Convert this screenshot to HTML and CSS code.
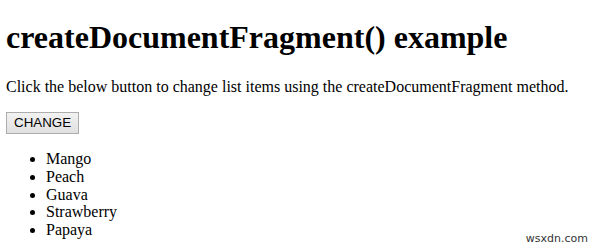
FILE: index.html
```html
<!DOCTYPE html>
<html lang="en">
<head>
    <meta charset="UTF-8">
    <meta name="viewport" content="width=device-width, initial-scale=1.0">
    <title>createDocumentFragment() example</title>
    <link rel="stylesheet" href="styles.css">
</head>
<body>
    <h1>createDocumentFragment() example</h1>
    <p>Click the below button to change list items using the createDocumentFragment method.</p>
    <button class="btn">CHANGE</button>
    <ul class="fruits">
        <li>Mango</li>
        <li>Peach</li>
        <li>Guava</li>
        <li>Strawberry</li>
        <li>Papaya</li>
    </ul>
    <div class="watermark">wsxdn.com</div>
</body>
</html>
```

FILE: styles.css
```css
body {
    font-family: 'Liberation Serif', 'Times New Roman', serif;
    font-size: 16px;
    color: #000;
    background: #fff;
    margin: 8px 6px;
}

h1 {
    font-size: 32px;
    margin: 11px 0 22px;
}

p {
    margin: 16px 0;
}

.btn {
    font-family: 'Liberation Sans', Arial, sans-serif;
    font-size: 13.33px;
    padding: 2px 7px 3px;
    border: 1px solid #adadad;
    border-radius: 0;
    background: linear-gradient(#f2f2f2, #e0e0e0);
    color: #000;
}

.fruits {
    margin: 16px 0;
    padding-left: 40px;
}

.fruits li {
    line-height: 17.8px;
}

.watermark {
    position: absolute;
    right: 12px;
    bottom: 5px;
    font-family: 'DejaVu Sans', sans-serif;
    font-size: 11px;
    color: #333;
}
```
